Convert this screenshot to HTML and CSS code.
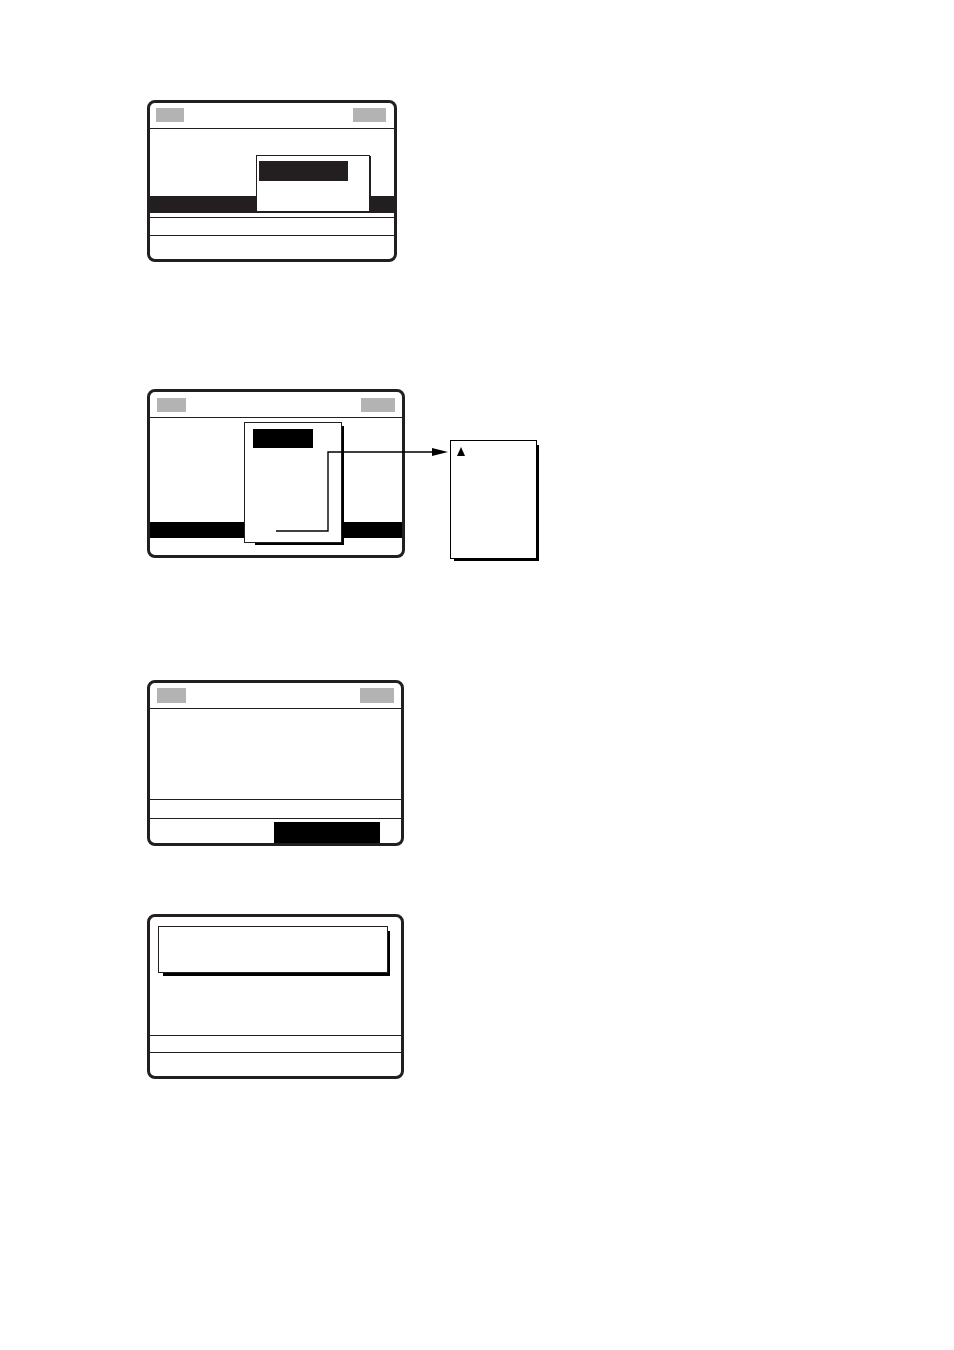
FILE: index.html
```html
<!DOCTYPE html>
<html lang="en">
<head>
<meta charset="utf-8">
<title>Screens</title>
<link rel="stylesheet" href="styles.css">
</head>
<body>
<main class="page">
  <section class="screen screen-1">
    <div class="header">
      <span class="tag tag-l"></span>
      <span class="tag tag-r"></span>
    </div>
    <div class="body body-1"></div>
    <div class="bar bar-1"></div>
    <div class="gap-1"></div>
    <div class="line-row row-1a"></div>
    <div class="line-row row-1b"></div>
    <div class="popup popup-1">
      <div class="sel sel-1"></div>
    </div>
  </section>

  <div class="row">
    <section class="screen screen-2">
      <div class="header">
        <span class="tag tag-l"></span>
        <span class="tag tag-r"></span>
      </div>
      <div class="body body-2"></div>
      <div class="bar bar-2"></div>
      <div class="foot-2"></div>
      <div class="popup popup-2">
        <div class="sel sel-2"></div>
      </div>
    </section>
    <aside class="list-panel">
      <span class="tri"></span>
    </aside>
    <svg class="connector" width="310" height="170" viewBox="0 0 310 170">
      <polyline points="129,142 181,142 181,63 287,63" fill="none" stroke="#000" stroke-width="1.4"/>
      <polygon points="285,59 301,63 285,67" fill="#000"/>
    </svg>
  </div>

  <section class="screen screen-3">
    <div class="header">
      <span class="tag tag-l"></span>
      <span class="tag tag-r"></span>
    </div>
    <div class="body body-3"></div>
    <div class="line-row row-3a"></div>
    <div class="line-row row-3b">
      <div class="sel sel-3"></div>
    </div>
  </section>

  <section class="screen screen-4">
    <div class="body body-4">
      <div class="msg-box"></div>
    </div>
    <div class="line-row row-4a"></div>
    <div class="line-row row-4b"></div>
  </section>
</main>
</body>
</html>
```
FILE: styles.css
```css
html {
  margin: 0;
  padding: 0;
  background: #fff;
}

body {
  margin: 0;
  padding: 0;
  font-family: "Liberation Sans", Arial, sans-serif;
}

.page {
  width: 954px;
  height: 1350px;
  box-sizing: border-box;
  padding: 100px 0 0 147px;
  display: flex;
  flex-direction: column;
  align-items: flex-start;
}

.screen {
  position: relative;
  box-sizing: border-box;
  border: 3px solid #231f20;
  border-radius: 8px;
  display: flex;
  flex-direction: column;
}

.screen-1 { width: 250px; height: 162px; }
.screen-2 { width: 258px; height: 169px; }
.screen-3 { width: 257px; height: 166px; margin-top: 121px; }
.screen-4 { width: 257px; height: 165px; margin-top: 68px; }

.header {
  box-sizing: border-box;
  height: 26px;
  border-bottom: 1px solid #231f20;
  display: flex;
  justify-content: space-between;
  align-items: flex-start;
  flex: none;
}

.screen-1 .header { padding: 5px 8px 0 6px; }
.screen-2 .header { padding: 6px 7px 0 7px; }
.screen-3 .header { padding: 5px 7px 0 7px; }

.tag {
  display: block;
  height: 14px;
  background: #b3b3b3;
}
.screen-1 .tag-l { width: 28px; }
.screen-1 .tag-r { width: 33px; }
.screen-2 .tag-l { width: 29px; }
.screen-2 .tag-r { width: 34px; }
.screen-3 .tag { height: 15px; }
.screen-3 .tag-l { width: 29px; }
.screen-3 .tag-r { width: 34px; }

.body { flex: none; }
.body-1 { height: 67px; }
.body-2 { height: 104px; }
.body-3 { height: 90px; }
.body-4 { height: 118px; }

.bar { flex: none; }
.bar-1 { height: 17px; background: #231f20; }
.bar-2 { height: 16px; background: #000; }

.gap-1 { height: 4px; flex: none; }
.foot-2 { height: 17px; flex: none; }

.line-row {
  box-sizing: border-box;
  border-top: 1px solid #231f20;
  flex: none;
}
.row-1a { height: 18px; }
.row-1b { height: 24px; }
.row-3a { height: 19px; }
.row-3b { height: 25px; padding: 3px 0 0 124px; }
.row-4a { height: 17px; }
.row-4b { height: 24px; }

.popup {
  position: absolute;
  box-sizing: border-box;
  background: #fff;
  border: 1px solid #231f20;
}

.popup-1 {
  left: 106px;
  top: 52px;
  width: 114px;
  height: 57px;
  padding: 5px 0 0 2px;
  box-shadow: 1px 1px 0 #231f20;
}

.popup-2 {
  left: 94px;
  top: 30px;
  width: 98px;
  height: 121px;
  padding: 6px 0 0 8px;
}

.popup-2::before,
.list-panel::before,
.msg-box::before {
  content: "";
  position: absolute;
  z-index: -1;
  background: #000;
}

.popup-2::before { left: 10px; top: 3px; right: -3px; bottom: -3px; }

.sel { display: block; }
.sel-1 { width: 89px; height: 20px; background: #231f20; }
.sel-2 { width: 60px; height: 19px; background: #000; }
.sel-3 { width: 106px; height: 21px; background: #000; }

.row {
  position: relative;
  display: flex;
  align-items: flex-start;
  margin-top: 127px;
}

.list-panel {
  position: relative;
  box-sizing: border-box;
  width: 87px;
  height: 119px;
  margin: 51px 0 0 45px;
  border: 1px solid #000;
  background: #fff;
  padding: 6px 0 0 6px;
}
.list-panel::before { left: 3px; top: 4px; right: -3px; bottom: -3px; }

.tri {
  display: block;
  width: 0;
  height: 0;
  border-left: 4.5px solid transparent;
  border-right: 4.5px solid transparent;
  border-bottom: 9px solid #000;
}

.connector {
  position: absolute;
  left: 0;
  top: 0;
  overflow: visible;
  pointer-events: none;
}

.body-4 { padding: 9px 0 0 8px; box-sizing: border-box; }

.msg-box {
  position: relative;
  box-sizing: border-box;
  width: 230px;
  height: 47px;
  border: 1px solid #231f20;
  background: #fff;
}
.msg-box::before { left: 4px; top: 4px; right: -3px; bottom: -4px; }
```
